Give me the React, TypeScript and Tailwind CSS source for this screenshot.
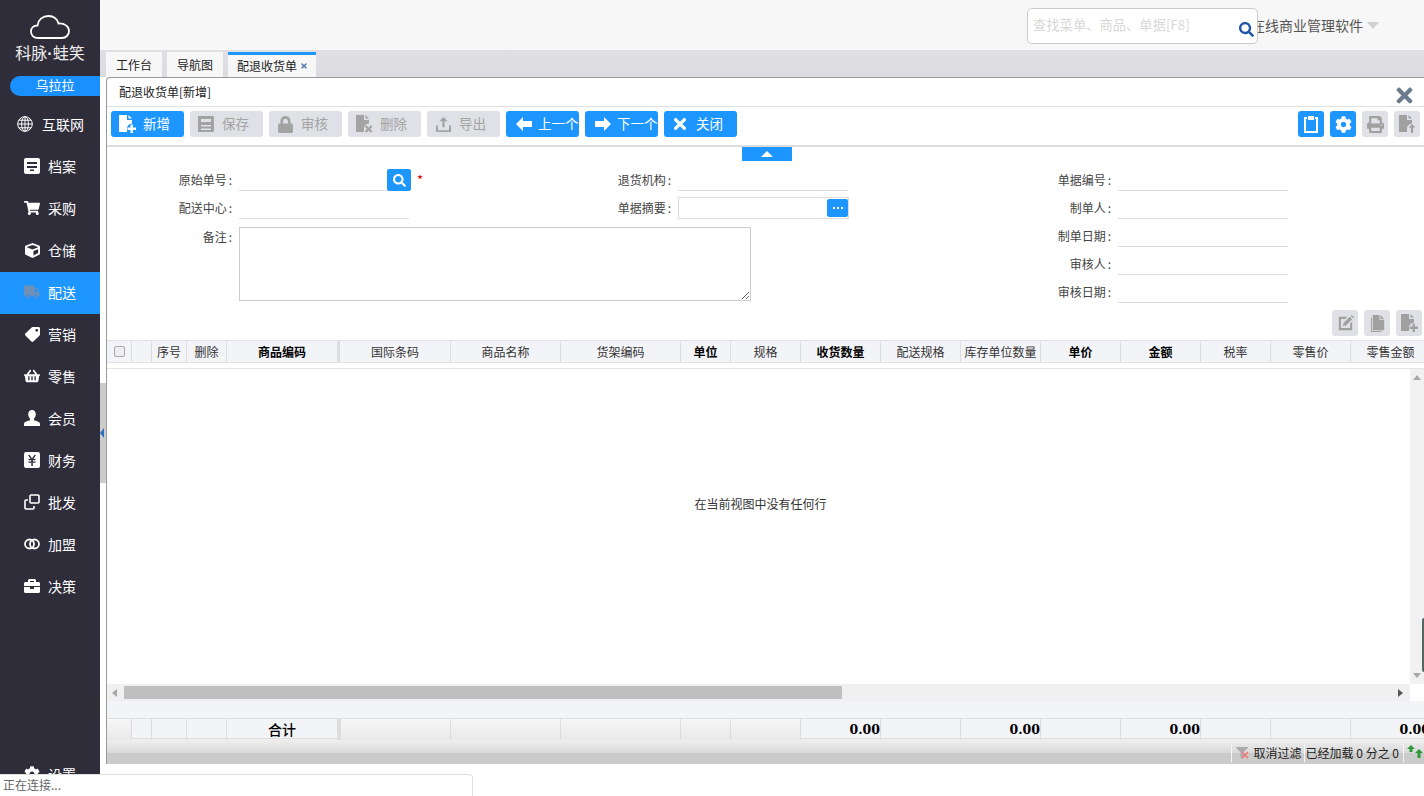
import { ReactNode } from "react";
import {
  FaBriefcase,
  FaCog,
  FaCube,
  FaFilter,
  FaLock,
  FaPrint,
  FaSearch,
  FaShoppingBasket,
  FaShoppingCart,
  FaTag,
  FaTimes,
  FaTruck,
} from "react-icons/fa";

const gridCols =
  "grid grid-cols-[24px_20px_35px_40px_111px_3px_110px_110px_120px_50px_70px_80px_80px_80px_80px_80px_70px_80px_80px]";

const FileIcon = ({ mark }: { mark?: "plus" | "x" | "up" }) => (
  <svg viewBox="0 0 20 20" className="h-[20px] w-[20px]" fill="currentColor">
    <path d="M2 1h8v5h5v3.5a5 5 0 0 0-5 5.5v3H2z" />
    <path d="M11.5 1l3.5 3.6h-3.5z" />
    {mark === "plus" && <path d="M13.5 10.5h2.4v3h3.1v2.4h-3.1V19h-2.4v-3.1h-3v-2.4h3z" />}
    {mark === "x" && <path d="M12.4 11.2l2.2 2.2 2.2-2.2 1.6 1.6-2.2 2.2 2.2 2.2-1.6 1.6-2.2-2.2-2.2 2.2-1.6-1.6 2.2-2.2-2.2-2.2z" />}
    {mark === "up" && <path d="M15 10l3.4 3.6h-2.3V19h-2.2v-5.4h-2.3z" />}
  </svg>
);

const SaveIcon = () => (
  <svg viewBox="0 0 18 18" className="h-[18px] w-[18px]" fill="currentColor">
    <path fillRule="evenodd" d="M2 1h14a1 1 0 0 1 1 1v14a1 1 0 0 1-1 1H2a1 1 0 0 1-1-1V2a1 1 0 0 1 1-1zm2 3v3h10V4zm0 6v1.600h10V10zm0 3.400V15h10v-1.600z" />
  </svg>
);

const ExportIcon = () => (
  <svg viewBox="0 0 18 18" className="h-[17px] w-[17px]" fill="currentColor">
    <path d="M9 1l4.500 4.600h-3.300V12H7.800V5.600H4.500z" />
    <path d="M1 10h2.200v5h11.600v-5H17v7H1z" />
  </svg>
);

const ArrowIcon = ({ right }: { right?: boolean }) => (
  <svg viewBox="0 0 16 14" className={`ml-[4px] h-[14px] w-[16px] ${right ? "-scale-x-100" : ""}`} fill="currentColor">
    <path d="M0 7l7-7v4h9v6H7v4z" />
  </svg>
);

const ClipboardIcon = () => (
  <svg viewBox="0 0 16 18" className="h-[18px] w-[16px]" fill="none" stroke="currentColor" strokeWidth="2">
    <path d="M4 3H2v14h12V3h-2" />
    <path d="M5 1h6v4H5z" fill="currentColor" stroke="none" />
  </svg>
);

const EditIcon = () => (
  <svg viewBox="0 0 20 20" className="h-[19px] w-[19px]" fill="currentColor">
    <path d="M3 3h9l-2.200 2.200H5.200v9.600h9.600v-4.600L17 8v9H3z" />
    <path d="M8 9.500l6.500-6.500 2.500 2.500-6.500 6.500-3.200.7zM15.500 2l1-1 2.500 2.500-1 1z" />
  </svg>
);

const CopyIcon = () => (
  <svg viewBox="0 0 20 20" className="h-[19px] w-[19px]" fill="currentColor">
    <path d="M5 1h7v5h5v11H5z" />
    <path d="M13 1l4 4h-4z" />
    <path d="M3 4v15h11v-1H4V4z" />
  </svg>
);

const GlobeIcon = () => (
  <svg viewBox="0 0 16 16" className="h-[16px] w-[16px]" fill="none" stroke="currentColor" strokeWidth="1">
    <circle cx="8" cy="8" r="7.300" />
    <ellipse cx="8" cy="8" rx="3.400" ry="7.300" />
    <path d="M8 .7v14.600M.7 8h14.600M1.800 4.200h12.400M1.800 11.800h12.400" />
  </svg>
);

const ArchiveIcon = () => (
  <svg viewBox="0 0 16 16" className="h-[16px] w-[16px]" fill="currentColor">
    <path fillRule="evenodd" d="M2 0h12a2 2 0 0 1 2 2v12a2 2 0 0 1-2 2H2a2 2 0 0 1-2-2V2a2 2 0 0 1 2-2zm1 4v2h10V4zm0 4v2h10V8zm3 3.500V13h4v-1.500z" />
  </svg>
);

const UserIcon = () => (
  <svg viewBox="0 0 16 16" className="h-[16px] w-[16px]" fill="currentColor">
    <path d="M8 0c2.300 0 3.800 1.700 3.800 4.200 0 1.900-.8 3.500-1.900 4.500v1.600c2.400.7 6.100 1.700 6.100 3.500V16H0v-2.200c0-1.800 3.700-2.800 6.100-3.500V8.700C5 7.700 4.200 6.100 4.200 4.200 4.200 1.700 5.700 0 8 0z" />
  </svg>
);

const YenIcon = () => (
  <svg viewBox="0 0 16 16" className="h-[16px] w-[16px]" fill="currentColor">
    <path fillRule="evenodd" d="M2 0h12a2 2 0 0 1 2 2v12a2 2 0 0 1-2 2H2a2 2 0 0 1-2-2V2a2 2 0 0 1 2-2zm2 3l2.600 4H4.500v1.300h2.800v1.100H4.500v1.300h2.800V14h1.500v-3.300h2.700V9.400H8.800V8.300h2.700V7H9.400L12 3h-1.700L8 6.600 5.700 3z" />
  </svg>
);

const BatchIcon = () => (
  <svg viewBox="0 0 16 16" className="h-[16px] w-[16px]" fill="none" stroke="currentColor" strokeWidth="1.600">
    <path d="M7 1h7a1 1 0 0 1 1 1v6a1 1 0 0 1-1 1H7a1 1 0 0 1-1-1V2a1 1 0 0 1 1-1z" />
    <path d="M4 6H2a1 1 0 0 0-1 1v7a1 1 0 0 0 1 1h7a1 1 0 0 0 1-1v-2" />
  </svg>
);

const RingsIcon = () => (
  <svg viewBox="0 0 16 12" className="h-[12px] w-[16px]" fill="none" stroke="currentColor" strokeWidth="1.800">
    <circle cx="5.500" cy="6" r="4.500" />
    <circle cx="10.500" cy="6" r="4.500" />
  </svg>
);

const CloudLogo = () => (
  <svg viewBox="0 0 40 24" className="h-[24px] w-[40px]" fill="none" stroke="#ffffff" strokeWidth="1.800">
    <path d="M8 23C3.500 23 1 20 1 16.500 1 13 3.500 10.500 7.500 10.500 8 5 12.500 1 18.500 1 24 1 27.500 4.500 28.500 8.500 34.500 8 39 11.500 39 16 39 20 36 23 32 23z" />
  </svg>
);

const navItems: { label: string; icon: ReactNode; active?: boolean; wide?: boolean }[] = [
  { label: "互联网", icon: <GlobeIcon />, wide: true },
  { label: "档案", icon: <ArchiveIcon /> },
  { label: "采购", icon: <FaShoppingCart size={16} /> },
  { label: "仓储", icon: <FaCube size={15} /> },
  { label: "配送", icon: <FaTruck size={16} className="text-[#6f8fb5]" />, active: true },
  { label: "营销", icon: <FaTag size={15} className="-scale-x-100" /> },
  { label: "零售", icon: <FaShoppingBasket size={16} /> },
  { label: "会员", icon: <UserIcon /> },
  { label: "财务", icon: <YenIcon /> },
  { label: "批发", icon: <BatchIcon /> },
  { label: "加盟", icon: <RingsIcon /> },
  { label: "决策", icon: <FaBriefcase size={16} /> },
];

const NavItem = ({ label, icon, active, wide }: { label: string; icon: ReactNode; active?: boolean; wide?: boolean }) => (
  <div className={`flex h-[42px] items-center pb-[2px] text-[14px] text-white ${active ? "bg-[#1e96ff]" : ""}`}>
    <span className={`flex justify-center ${wide ? "w-[42px] pl-[17px] pr-[9px]" : "w-[48px] pl-[24px] pr-[8px]"}`}>{icon}</span>
    <span>{label}</span>
  </div>
);

const Sidebar = () => (
  <aside className="flex h-[796px] w-[100px] shrink-0 flex-col bg-[#302d3b]">
    <div className="flex h-[76px] flex-col items-center pt-[15px]">
      <CloudLogo />
      <div className="mt-[3px] text-[16px] leading-[20px] text-[#eeeeee]">
        科脉<span className="font-['Liberation_Sans',sans-serif] font-bold">·</span>蛙笑
      </div>
    </div>
    <div className="ml-[10px] flex h-[20px] items-center justify-center rounded-l-full bg-[#1a90ff] pb-[3px] text-[13px] text-white">
      乌拉拉
    </div>
    <nav className="mt-[8px]">
      {navItems.map((item) => (
        <NavItem key={item.label} {...item} />
      ))}
    </nav>
    <div className="mt-auto h-[42px]">
      <NavItem label="设置" icon={<FaCog size={16} />} />
    </div>
  </aside>
);

const ToolButton = ({ label, icon, on }: { label: string; icon: ReactNode; on?: boolean }) => (
  <button
    className={`flex h-[26px] w-[73px] items-center rounded-[3px] pl-[6px] text-[13.500px] whitespace-nowrap ${
      on ? "bg-[#1e96ff] text-white" : "bg-[#dfe1e6] text-[#a3a3a3]"
    }`}
  >
    <span className="flex w-[20px] shrink-0 justify-center">{icon}</span>
    <span className="mb-[2px] ml-[6px]">{label}</span>
  </button>
);

const IconButton = ({ icon, on }: { icon: ReactNode; on?: boolean }) => (
  <button
    className={`flex h-[26px] w-[26px] items-center justify-center rounded-[3px] ${
      on ? "bg-[#1e96ff] text-white" : "bg-[#dfe1e6] text-[#a0a0a0]"
    }`}
  >
    {icon}
  </button>
);

const Toolbar = () => (
  <div className="flex h-[40px] items-start justify-between border-b-2 border-[#dddddd] px-[4px] pt-[4px]">
    <div className="flex gap-[6px]">
      <ToolButton on label="新增" icon={<FileIcon mark="plus" />} />
      <ToolButton label="保存" icon={<SaveIcon />} />
      <ToolButton label="审核" icon={<FaLock size={17} />} />
      <ToolButton label="删除" icon={<FileIcon mark="x" />} />
      <ToolButton label="导出" icon={<ExportIcon />} />
      <ToolButton on label="上一个" icon={<ArrowIcon />} />
      <ToolButton on label="下一个" icon={<ArrowIcon right />} />
      <ToolButton on label="关闭" icon={<FaTimes size={18} />} />
    </div>
    <div className="flex gap-[6px]">
      <IconButton on icon={<ClipboardIcon />} />
      <IconButton on icon={<FaCog size={17} />} />
      <IconButton icon={<FaPrint size={17} />} />
      <IconButton icon={<FileIcon mark="up" />} />
    </div>
  </div>
);

const Label = ({ children }: { children: ReactNode }) => (
  <span className="w-[125px] shrink-0 text-right text-[12px] text-[#444444]">
    {children}
    <span className="ml-[2px]">:</span>
  </span>
);

const Underline = ({ wide }: { wide?: boolean }) => (
  <div className={`ml-[7px] h-[22px] border-b border-[#dddddd] ${wide ? "w-[148px]" : "w-[170px]"}`} />
);

const Field = ({ label, children }: { label: string; children?: ReactNode }) => (
  <div className="flex h-[28px] items-center">
    <Label>{label}</Label>
    {children ?? <Underline />}
  </div>
);

const FormArea = () => (
  <div className="relative h-[163px] pt-[19px]">
    <div className="absolute left-[635px] top-0 flex h-[14px] w-[50px] items-center justify-center bg-[#1e96ff]">
      <span className="h-0 w-0 border-x-[6px] border-b-[6px] border-x-transparent border-b-white" />
    </div>
    <div className="grid grid-cols-[439px_440px_440px] grid-rows-[28px_28px_28px_28px_28px]">
      <Field label="原始单号">
        <Underline wide />
        <button className="flex h-[22px] w-[24px] items-center justify-center rounded-[2px] bg-[#1e96ff] text-white">
          <FaSearch size={13} />
        </button>
        <span className="ml-[6px] text-[13px] text-[#e00000]">*</span>
      </Field>
      <Field label="退货机构" />
      <Field label="单据编号" />
      <Field label="配送中心" />
      <Field label="单据摘要">
        <div className="ml-[7px] flex h-[22px] w-[171px] items-center justify-end border border-[#dddddd]">
          <span className="flex h-[18px] w-[21px] items-center justify-center gap-[2px] rounded-[2px] bg-[#1e96ff]">
            <i className="h-[2px] w-[2px] bg-white" />
            <i className="h-[2px] w-[2px] bg-white" />
            <i className="h-[2px] w-[2px] bg-white" />
          </span>
        </div>
      </Field>
      <Field label="制单人" />
      <div className="col-span-2 row-span-3 flex items-start pt-[5px]">
        <span className="flex h-[20px] items-center">
          <Label>备注</Label>
        </span>
        <textarea className="ml-[7px] h-[74px] w-[512px] resize-y border border-[#cccccc] outline-none" />
      </div>
      <Field label="制单日期" />
      <Field label="审核人" />
      <Field label="审核日期" />
    </div>
  </div>
);

const headers: { label: string; bold?: boolean }[] = [
  { label: "序号" },
  { label: "删除" },
  { label: "商品编码", bold: true },
  { label: "" },
  { label: "国际条码" },
  { label: "商品名称" },
  { label: "货架编码" },
  { label: "单位", bold: true },
  { label: "规格" },
  { label: "收货数量", bold: true },
  { label: "配送规格" },
  { label: "库存单位数量" },
  { label: "单价", bold: true },
  { label: "金额", bold: true },
  { label: "税率" },
  { label: "零售价" },
  { label: "零售金额" },
];

const GridHeader = () => (
  <div className={`${gridCols} h-[23px] border-y border-[#e2e3e8] bg-[#f3f4f8] text-[12px]`}>
    <div className="flex items-center justify-center">
      <span className="h-[11px] w-[11px] rounded-[2px] border border-[#aaaaaa] bg-[#eeeeee]" />
    </div>
    <div className="border-l border-[#dddddd]" />
    {headers.map((h, i) =>
      h.label === "" ? (
        <div key={i} className="bg-[#dddddd]" />
      ) : (
        <div
          key={i}
          className={`flex items-center justify-center whitespace-nowrap ${i === 4 ? "" : "border-l"} border-[#dddddd] ${
            h.bold ? "font-bold text-black" : "text-[#333333]"
          }`}
        >
          {h.label}
        </div>
      ),
    )}
  </div>
);

const GridBody = () => (
  <div className="flex h-[333px] flex-col border-t border-[#e2e3e8]">
    <div className="flex h-[315px]">
      <div className="flex flex-1 items-center justify-center pb-[46px] pl-[4px] text-[12px] text-[#333333]">在当前视图中没有任何行</div>
      <div className="relative flex w-[14px] flex-col items-center justify-between bg-[#f1f1f1] py-[6px]">
        <span className="h-0 w-0 border-x-[4px] border-b-[5px] border-x-transparent border-b-[#a8a8a8]" />
        <span className="absolute bottom-[12px] right-0 h-[54px] w-[2px] rounded-l-[2px] bg-[#556666]" />
        <span className="h-0 w-0 border-x-[4px] border-t-[5px] border-x-transparent border-t-[#a8a8a8]" />
      </div>
    </div>
    <div className="flex h-[17px] items-center bg-[#f0f0f0]">
      <span className="ml-[5px] h-0 w-0 border-y-[4px] border-r-[5px] border-y-transparent border-r-[#a8a8a8]" />
      <span className="ml-[7px] h-[13px] w-[718px] bg-[#bfbfbf]" />
      <span className="ml-[556px] h-0 w-0 border-y-[4px] border-l-[5px] border-y-transparent border-l-[#555555]" />
      <span className="ml-auto h-full w-[14px] bg-white" />
    </div>
  </div>
);

const totalCell = "border-l border-[#dddddd]";
const grayCell = "border-l border-[#dddddd] bg-gradient-to-b from-[#f6f6f6] to-[#e9e9e9]";

const Amount = () => (
  <div className={`${totalCell} text-right font-['DejaVu_Serif',serif] text-[12.500px] font-bold leading-[21px] text-black`}>0.00</div>
);

const GridFooter = () => (
  <div className={`${gridCols} h-[21px] border-y border-[#dddddd] bg-[#f3f4f8]`}>
    <div className="bg-gradient-to-b from-[#f6f6f6] to-[#e9e9e9]" />
    <div className={totalCell} />
    <div className={totalCell} />
    <div className={totalCell} />
    <div className={`${totalCell} flex items-center justify-center text-[14px] font-medium text-black`}>合计</div>
    <div className="bg-[#dddddd]" />
    <div className={grayCell} />
    <div className={grayCell} />
    <div className={grayCell} />
    <div className={grayCell} />
    <div className={grayCell} />
    <Amount />
    <div className={totalCell} />
    <Amount />
    <div className={totalCell} />
    <Amount />
    <div className={totalCell} />
    <div className={totalCell} />
    <Amount />
  </div>
);

const Pager = () => (
  <div className="flex h-[25px] items-center justify-end bg-[linear-gradient(#f0f0f0,#d9d9d9_55%,#cbcbcb_56%,#cbcbcb)] pt-[3px] text-[12px] text-[#222222]">
    <div className="flex h-[18px] items-center gap-[3px] border-l border-[#f5f5f5] pl-[4px]">
      <span className="relative text-[#aaaaaa]">
        <FaFilter size={12} />
        <FaTimes size={10} className="absolute left-[4px] top-[3px] text-[#e88080]" />
      </span>
      <span className="ml-[3px] whitespace-nowrap">取消过滤</span>
    </div>
    <div className="ml-[2px] flex h-[18px] items-center whitespace-nowrap border-l border-[#f5f5f5] pl-[1px]">已经加载 0 分之 0</div>
    <div className="ml-[4px] flex h-[18px] w-[21px] items-center border-l border-[#f5f5f5] pl-[3px]">
      <svg viewBox="0 0 16 14" className="mb-[4px] h-[14px] w-[16px]" fill="#2f9a3a">
        <path d="M0 5l4-4 4 4H5.500v3h-3V5zM8 9l4-4 4 4h-2.500v5h-3V9z" />
      </svg>
    </div>
  </div>
);

const TopBar = () => (
  <header className="flex h-[50px] items-center justify-end bg-[#f7f7f7] pr-[45px]">
    <div className="relative z-10 -mr-[7px] mt-[2px] h-[36px] w-[231px] rounded-[5px] border border-[#cccccc] bg-white pl-[5px] text-[13.300px] leading-[32px] text-[#d8d8d8]">
      查找菜单、商品、单据[F8]
      <FaSearch size={15} className="absolute right-[3px] top-[13px] text-[#1f56a8]" />
    </div>
    <span className="text-[14px] text-[#555555]">在线商业管理软件</span>
    <span className="ml-[4px] h-0 w-0 border-x-[6px] border-t-[7px] border-x-transparent border-t-[#d0d0d0]" />
  </header>
);

const Tabs = () => (
  <div className="flex h-[27px] items-end gap-[5px] bg-gradient-to-b from-[#dfdfe4] to-[#dcdce0] pl-[6px] text-[12px] text-[#222222]">
    <div className="flex h-[25px] w-[56px] items-center justify-center bg-[#f7f7f7]">工作台</div>
    <div className="flex h-[25px] w-[56px] items-center justify-center bg-[#f7f7f7]">导航图</div>
    <div className="flex h-[25px] w-[88px] items-center justify-center gap-[3px] border-t-[3px] border-[#1e96ff] bg-[#f7f7f7] pl-[1px]">
      配退收货单
      <FaTimes size={8} className="text-[#5577aa]" />
    </div>
  </div>
);

export default function App() {
  return (
    <div className="relative flex h-[796px] w-[1424px] overflow-hidden bg-white font-['Noto_Sans_CJK_SC','Liberation_Sans',sans-serif]">
      <Sidebar />
      <main className="w-[1324px]">
        <TopBar />
        <Tabs />
        <div className="relative pl-[6px]">
          <span className="absolute left-0 top-[306px] flex h-[100px] w-[6px] items-center bg-[#cccccc]">
            <span className="h-0 w-0 border-y-[5px] border-r-[4px] border-y-transparent border-r-[#2a6fc0]" />
          </span>
          <section className="h-[687px] overflow-hidden rounded-tl-[4px] border-l border-t border-[#999999]">
            <div className="flex h-[29px] items-center justify-between border-b border-[#e0e0e0] pl-[12px] pr-[8px] text-[12px] text-[#222222]">
              配退收货单[新增]
              <FaTimes size={23} className="mt-[7px] text-[#6b7b8d]" />
            </div>
            <Toolbar />
            <FormArea />
            <div className="flex justify-end gap-[6px] pr-[2px]">
              <IconButton icon={<EditIcon />} />
              <IconButton icon={<CopyIcon />} />
              <IconButton icon={<FileIcon mark="plus" />} />
            </div>
            <div className="h-[4px]" />
            <GridHeader />
            <div className="h-[5px]" />
            <GridBody />
            <div className="h-[17px] bg-[#f3f4f8]" />
            <GridFooter />
            <Pager />
          </section>
        </div>
      </main>
      <div className="absolute bottom-0 left-0 h-[22px] w-[473px] rounded-tr-[4px] border-r border-t border-[#e0e0e0] bg-white pl-[3px] text-[12px] leading-[20px] text-[#666666]">
        正在连接...
      </div>
    </div>
  );
}
